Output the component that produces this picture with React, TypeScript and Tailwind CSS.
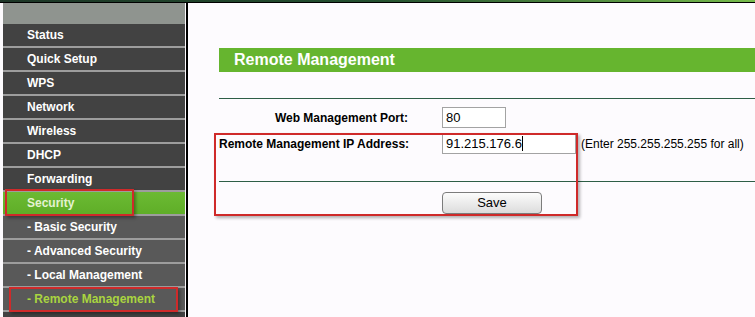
import React from "react";

const menu = [
  { label: "Status", kind: "main" },
  { label: "Quick Setup", kind: "main" },
  { label: "WPS", kind: "main" },
  { label: "Network", kind: "main" },
  { label: "Wireless", kind: "main" },
  { label: "DHCP", kind: "main" },
  { label: "Forwarding", kind: "main" },
  { label: "Security", kind: "active" },
  { label: "- Basic Security", kind: "sub" },
  { label: "- Advanced Security", kind: "sub" },
  { label: "- Local Management", kind: "sub" },
  { label: "- Remote Management", kind: "subActive" },
  { label: "", kind: "main" },
];

function MenuItem({ label, kind }: { label: string; kind: string }) {
  const bg =
    kind === "active"
      ? "bg-gradient-to-b from-[#6cba33] to-[#5fae28]"
      : kind === "sub" || kind === "subActive"
        ? "bg-[#595959]"
        : "bg-[#424242]";
  const color =
    kind === "active" ? "text-[#e4f2d2]" : kind === "subActive" ? "text-[#a9d440]" : "text-white";
  return (
    <div className="flex flex-col shrink-0">
      <div className={`h-[22px] flex items-center pl-[24px] text-[12px] font-bold whitespace-nowrap ${bg} ${color}`}>
        {label}
      </div>
      <div className="h-[2px] bg-[#9d9d9d]" />
    </div>
  );
}

export default function App() {
  return (
    <div className="w-[755px] h-[317px] overflow-hidden bg-[#fdfbfe] flex flex-col font-['Liberation_Sans',Arial,sans-serif] relative">
      <div className="h-[2px] bg-gradient-to-r from-[#1c3526] via-[#24502f] to-[#78bd4c]" />
      <div className="h-px bg-black" />

      <div className="flex flex-1 min-h-0">
        {/* Sidebar */}
        <div className="ml-[3px] w-[182px] flex flex-col overflow-hidden bg-[#424242]">
          <div className="h-[21px] bg-[#8f948f] shrink-0" />
          {menu.map((m, i) => (
            <MenuItem key={i} label={m.label} kind={m.kind} />
          ))}
        </div>
        <div className="ml-px w-[2px] bg-black" />

        {/* Content */}
        <div className="flex-1 flex flex-col pl-[31px] pt-[45px]">
          <div className="h-[24px] bg-[#66b52f] flex items-center pl-[15px] text-white text-[16px] font-bold">
            Remote Management
          </div>
          <div className="mt-[26px] h-px bg-[#2e5e46]" />

          <div className="mt-[8px] flex items-center h-[21px]">
            <div className="w-[189px] text-right text-[12px] font-bold text-black whitespace-nowrap">Web Management Port:</div>
            <div className="ml-[34px] w-[64px] h-[21px] border border-[#a3a3a3] bg-white flex items-center pl-[3px] text-[13px] text-black">
              80
            </div>
          </div>

          <div className="mt-[5px] flex items-center h-[21px]">
            <div className="w-[189px] text-right text-[12px] font-bold text-black whitespace-nowrap">Remote Management IP Address:</div>
            <div className="ml-[34px] w-[134px] h-[21px] border border-[#a3a3a3] bg-white flex items-center pl-[3px] text-[13px] text-black">
              91.215.176.6
              <span className="w-px h-[15px] bg-black" />
            </div>
            <div className="ml-[5px] text-[12px] text-black whitespace-nowrap">(Enter 255.255.255.255 for all)</div>
          </div>

          <div className="mt-[27px] h-px bg-[#2e5e46]" />

          <div className="mt-[8px] pl-[223px]">
            <button className="w-[100px] h-[22px] rounded-[4px] border border-[#7c7c7c] bg-gradient-to-b from-[#fcfcfc] to-[#dcdcdc] text-[13px] text-black leading-none">
              Save
            </button>
          </div>
        </div>
      </div>

      {/* Annotation boxes */}
      <div className="absolute left-[5px] top-[189px] w-[129px] h-[27px] border-2 border-solid border-[#cf2a2a] shadow-[2px_2px_3px_rgba(0,0,0,0.35)]" />
      <div className="absolute left-[9px] top-[287px] w-[169px] h-[25px] border-2 border-solid border-[#cf2a2a] shadow-[2px_2px_3px_rgba(0,0,0,0.35)]" />
      <div className="absolute left-[214px] top-[133px] w-[364px] h-[83px] border-2 border-solid border-[#cf2a2a] shadow-[2px_2px_3px_rgba(0,0,0,0.3)]" />
    </div>
  );
}
